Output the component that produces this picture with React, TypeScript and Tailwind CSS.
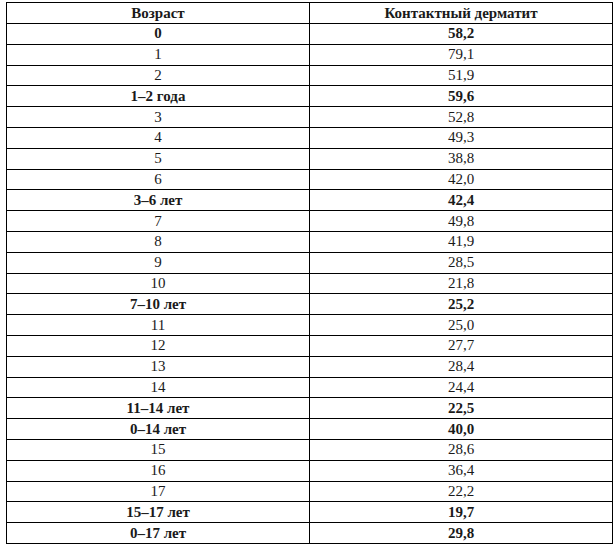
const rows: [string, string, boolean][] = [
  ["0", "58,2", true],
  ["1", "79,1", false],
  ["2", "51,9", false],
  ["1–2 года", "59,6", true],
  ["3", "52,8", false],
  ["4", "49,3", false],
  ["5", "38,8", false],
  ["6", "42,0", false],
  ["3–6 лет", "42,4", true],
  ["7", "49,8", false],
  ["8", "41,9", false],
  ["9", "28,5", false],
  ["10", "21,8", false],
  ["7–10 лет", "25,2", true],
  ["11", "25,0", false],
  ["12", "27,7", false],
  ["13", "28,4", false],
  ["14", "24,4", false],
  ["11–14 лет", "22,5", true],
  ["0–14 лет", "40,0", true],
  ["15", "28,6", false],
  ["16", "36,4", false],
  ["17", "22,2", false],
  ["15–17 лет", "19,7", true],
  ["0–17 лет", "29,8", true],
];

export default function App() {
  return (
    <div className="w-[616px] h-[551px] bg-white pt-[2px] pl-[6px]">
      <table
        className="w-[607px] border-collapse text-[15px] leading-none text-[#1a1a1a]"
        style={{ fontFamily: '"Liberation Serif", "DejaVu Serif", serif' }}
      >
        <thead>
          <tr>
            <th className="h-[21px] w-1/2 border border-black p-0 text-center font-bold">Возраст</th>
            <th className="h-[21px] w-1/2 border border-black p-0 text-center font-bold">Контактный дерматит</th>
          </tr>
        </thead>
        <tbody>
          {rows.map(([age, val, bold]) => (
            <tr key={age} className={bold ? "font-bold" : "font-normal"}>
              <td className="h-[20.8px] border border-black p-0 text-center">{age}</td>
              <td className="h-[20.8px] border border-black p-0 text-center">{val}</td>
            </tr>
          ))}
        </tbody>
      </table>
    </div>
  );
}
